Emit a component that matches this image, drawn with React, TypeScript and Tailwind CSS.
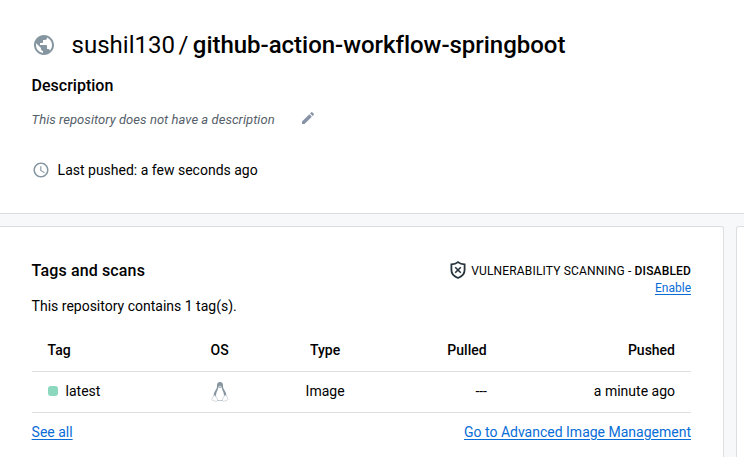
import React from 'react';
import { MdAccessTime, MdEdit, MdPublic } from 'react-icons/md';

function ShieldOff() {
  return (
    <svg width="16" height="18" viewBox="0 0 16 18" fill="none" stroke="#27343d" strokeWidth="1.8">
      <path d="M8 1.1C6.2 2.6 3.800 3.300 1.400 3.400V9c0 3.900 2.600 6.500 6.600 8 4-1.500 6.600-4.100 6.600-8V3.400C12.200 3.300 9.800 2.600 8 1.100Z" />
      <path d="M5.200 6.200l5.600 5.600M10.800 6.200l-5.600 5.600" strokeWidth="1.600" />
    </svg>
  );
}

function Penguin() {
  return (
    <svg width="18" height="20" viewBox="0 0 18 20" fill="none">
      <path d="M9 0C6.700 0 5.900 1.500 6 3.600c.1 2.500-.7 3.500-1.900 5.300C2.900 10.700 2.600 12.200 2.600 14.200l3.400 4.600h6l3.400-4.600c0-2-.3-3.500-1.500-5.300-1.200-1.800-2-2.800-1.900-5.300C12.100 1.500 11.300 0 9 0Z" fill="#8796a0" />
      <path d="M7.300 5.300 9 6.100l1.700-.8c.2 2.100 1.300 3.700 1.900 5.700.8 2.600.4 5.200-1.100 6.800-1.500 1-3.500 1-5 0-1.500-1.600-1.900-4.200-1.100-6.800.6-2 1.700-3.600 1.900-5.700Z" fill="#fff" />
      <path d="M7.300 4.300 9 3.500l1.700.8L9 5.700Z" fill="#c9d0d5" />
      <path d="M3.300 13.300c1.200.5 2.400 2.300 3.200 4.200.4 1.400-.6 2.200-2 1.800L1.500 18.400c-.8-.3-.4-1.300-.4-2.200 0-.8.300-1.100 1.100-1.200.7-.1.400-1.500 1.100-1.700ZM14.700 13.300c-1.500.3-2.800 1.600-3.200 4.200-.2 1.600.8 2.200 2.100 1.700l3-1.400c.8-.5.400-1.100.1-1.800-.3-.7-.6-1-.9-1.500-.3-.6-.4-1.200-1.100-1.200Z" fill="#fff" stroke="#cbd1d5" strokeWidth=".8" />
    </svg>
  );
}

const link = 'text-[#086dd7] underline underline-offset-2';

export default function App() {
  return (
    <div className="flex h-[457px] w-[744px] flex-col overflow-hidden bg-[#f7f8fa] font-['Roboto',sans-serif] text-sm leading-5 whitespace-nowrap text-black">
      <header className="h-[214px] shrink-0 border-b border-[#dcdfe2] bg-white pt-[29px] pl-[31.6px]">
        <h1 className="flex h-8 items-center text-2xl leading-8">
          <MdPublic className="mr-4 size-6 text-[#8596a1]" />
          <span>sushil130</span>
          <span className="mr-[4.500px] ml-[3.500px]">/</span>
          <span className="font-medium tracking-[-0.03px]">github-action-workflow-springboot</span>
        </h1>
        <h2 className="mt-[13px] text-base leading-6 font-medium">Description</h2>
        <div className="mt-3 flex h-5 items-center">
          <em className="w-[268px] text-[13px] tracking-[0.045px] text-[#556069]">This repository does not have a description</em>
          <MdEdit className="mb-1 size-4 text-[#8993a8]" />
        </div>
        <div className="mt-[30px] flex h-5 items-center">
          <MdAccessTime className="mr-2 size-[18px] text-[#8596a1]" />
          <span>Last pushed: a few seconds ago</span>
        </div>
      </header>

      <main className="flex flex-1 gap-3 pt-3">
        <section className="w-[724px] rounded-tr-[3px] border-t border-r border-[#dcdfe2] bg-white pt-8 pr-8 pl-[31.6px]">
          <div className="flex h-[70px] justify-between">
            <div>
              <h2 className="text-base leading-6 font-medium tracking-[0.14px]">Tags and scans</h2>
              <p className="mt-[13px]">This repository contains 1 tag(s).</p>
            </div>
            <div className="text-right text-xs leading-[17px]">
              <div className="mt-[3px] flex h-[18px] items-center">
                <div className="-mt-[2px]"><ShieldOff /></div>
                <span className="ml-[5px] tracking-[0.16px]">VULNERABILITY SCANNING - <b className="font-medium">DISABLED</b></span>
              </div>
              <a className={link}>Enable</a>
            </div>
          </div>
          <table className="w-full table-fixed border-collapse">
            <thead>
              <tr className="h-[42px] border-b border-[#dcdfe2] [&>th]:p-0 [&>th]:font-medium">
                <th className="w-[150px] text-left"><span className="pl-4">Tag</span></th>
                <th className="w-[76px]">OS</th>
                <th className="w-[135px]">Type</th>
                <th className="w-[94px] text-right">Pulled</th>
                <th className="text-right"><span className="pr-4">Pushed</span></th>
              </tr>
            </thead>
            <tbody>
              <tr className="h-[41px] border-b border-[#dcdfe2] [&>td]:p-0 [&>td]:pb-[2px]">
                <td>
                  <div className="flex items-center pl-4">
                    <span className="mr-2 size-[10px] rounded-[3px] bg-[#8bd8be]" />
                    latest
                  </div>
                </td>
                <td><div className="flex justify-center pt-[2px]"><Penguin /></div></td>
                <td className="text-center">Image</td>
                <td className="text-right tracking-[-0.2px]">---</td>
                <td className="text-right"><span className="pr-4">a minute ago</span></td>
              </tr>
            </tbody>
          </table>
          <div className="mt-[9px] flex justify-between">
            <a className={link}>See all</a>
            <a className={link}>Go to Advanced Image Management</a>
          </div>
        </section>
        <aside className="flex-1 rounded-tl-[3px] border-t border-l border-[#dcdfe2] bg-white" />
      </main>
    </div>
  );
}
